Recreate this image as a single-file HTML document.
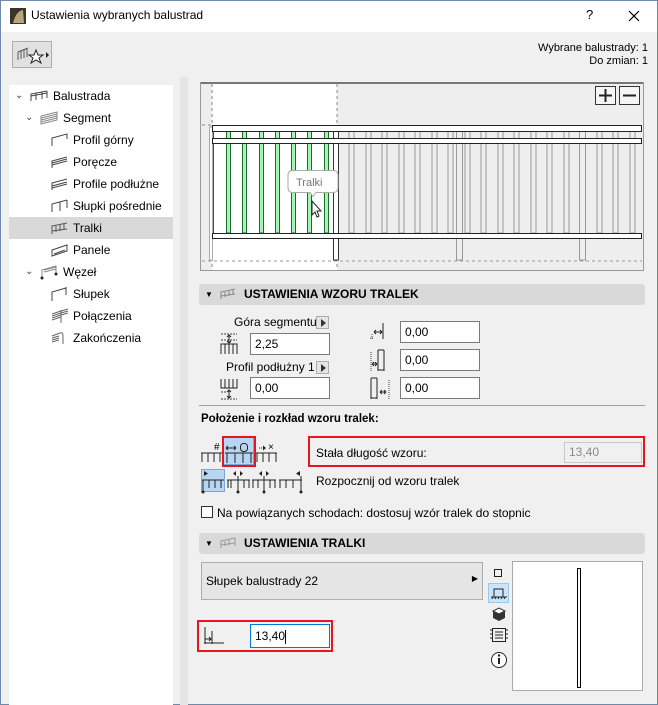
<!DOCTYPE html>
<html><head><meta charset="utf-8"><style>
*{box-sizing:border-box;margin:0;padding:0}
body{width:658px;height:705px;overflow:hidden;background:#f0f0f0;font-family:"Liberation Sans",sans-serif;font-size:12px;color:#000;position:relative}
.a{position:absolute}
.win{position:absolute;left:0;top:0;width:658px;height:705px;border:1px solid #6d8aa8}
.title{left:1px;top:1px;width:656px;height:31px;background:#fff}
.tree{left:9px;top:85px;width:164px;height:620px;background:#fff}
.ti{position:absolute;height:22px;line-height:22px;font-size:12px}
.sel{background:#d9d9d9}
.hdr{background:#d9d9d9;border-radius:3px;height:21px;font-weight:bold;font-size:12px;line-height:21px}
.inp{position:absolute;background:#fff;border:1px solid #7a7a7a;height:22px;line-height:20px;padding-left:4px;font-size:12px}
.red{position:absolute;border:2px solid #e8141e}
.btn{position:absolute;width:13px;height:13px;border:1px solid #adadad;background:#e5e5e5}
.btn:after{content:"";position:absolute;left:4px;top:2px;border-left:5px solid #333;border-top:4px solid transparent;border-bottom:4px solid transparent}
</style></head><body>
<div class="win"></div>
<div class="a title"></div>
<svg class="a" style="left:10px;top:8px" width="16" height="16"><rect width="16" height="16" fill="#3b3428"/><path d="M3 15 Q6 3 13 2 L14 15 Z" fill="#b9a57a"/></svg>
<div class="a" style="left:31px;top:8px;font-size:12px">Ustawienia wybranych balustrad</div>
<div class="a" style="left:586px;top:7px;font-size:13px">?</div>
<svg class="a" style="left:628px;top:10px" width="12" height="12"><path d="M1 1 L11 11 M11 1 L1 11" stroke="#000" stroke-width="1.2"/></svg>

<div class="a" style="left:12px;top:41px;width:40px;height:27px;border:1px solid #adadad;background:#e1e1e1"></div>
<svg class="a" style="left:14px;top:44px" width="36" height="22"><path d="M4 8 L14 4 M4 8 v8 M7 7 v8 M10 6 v8 M13 5 v8" stroke="#555" fill="none"/><path d="M22 6 l2 5 5 0 -4 3 2 5 -5 -3 -5 3 2 -5 -4 -3 5 0z" stroke="#222" fill="#fff"/><path d="M32 8 l3 3 -3 3z" fill="#222"/></svg>
<div class="a" style="right:10px;top:42px;text-align:right;font-size:11px;line-height:13px">Wybrane balustrady: 1<br>Do zmian: 1</div>

<div class="a tree">
<div class="ti" style="left:0;top:0;width:164px"><span style="position:absolute;left:6px;font-size:10px;color:#444">⌄</span><svg style="position:absolute;left:21px;top:5px" width="18" height="12"><path d="M1 11 V4 L17 1 M6 10 V3 M12 9 V2 M17 1 V8 M1 6 L17 3" stroke="#444" fill="none"/></svg><span style="position:absolute;left:44px">Balustrada</span></div>
<div class="ti" style="left:0;top:22px;width:164px"><span style="position:absolute;left:16px;font-size:10px;color:#444">⌄</span><svg style="position:absolute;left:31px;top:4px" width="18" height="14"><path d="M1 13 V5 L17 1 V9 Z M1 7 L17 3 M1 9 L17 5 M1 11 L17 7" stroke="#888" fill="none"/></svg><span style="position:absolute;left:54px">Segment</span></div>
<div class="ti" style="left:0;top:44px;width:164px"><svg style="position:absolute;left:42px;top:4px" width="18" height="14"><path d="M1 13 V5 L16 1 V6" stroke="#444" fill="none"/></svg><span style="position:absolute;left:64px">Profil górny</span></div>
<div class="ti" style="left:0;top:66px;width:164px"><svg style="position:absolute;left:42px;top:4px" width="18" height="14"><path d="M1 13 V6 L16 2 M1 8 L16 4 M1 10 L16 6" stroke="#444" fill="none"/></svg><span style="position:absolute;left:64px">Poręcze</span></div>
<div class="ti" style="left:0;top:88px;width:164px"><svg style="position:absolute;left:42px;top:4px" width="18" height="14"><path d="M1 13 V6 L16 2 M1 9 L16 5 M1 11 L16 7" stroke="#444" fill="none"/></svg><span style="position:absolute;left:64px">Profile podłużne</span></div>
<div class="ti" style="left:0;top:110px;width:164px"><svg style="position:absolute;left:42px;top:4px" width="18" height="14"><path d="M1 13 V5 L16 1 M9 3 V12 M16 1 V9" stroke="#444" fill="none"/></svg><span style="position:absolute;left:64px">Słupki pośrednie</span></div>
<div class="ti sel" style="left:0;top:132px;width:164px"><svg style="position:absolute;left:42px;top:4px" width="18" height="14"><path d="M1 13 V5 L16 2 M1 10 L16 8 M5 5 V11 M9 4 V10 M13 3 V9" stroke="#555" fill="none"/></svg><span style="position:absolute;left:64px">Tralki</span></div>
<div class="ti" style="left:0;top:154px;width:164px"><svg style="position:absolute;left:42px;top:4px" width="18" height="14"><path d="M1 13 V7 L16 2 V8 Z M3 11 L14 7" stroke="#444" fill="none"/></svg><span style="position:absolute;left:64px">Panele</span></div>
<div class="ti" style="left:0;top:176px;width:164px"><span style="position:absolute;left:16px;font-size:10px;color:#444">⌄</span><svg style="position:absolute;left:31px;top:3px" width="18" height="16"><path d="M2 14 V6 L16 2 V10 M4 6 L16 3 M4 8 L16 5" stroke="#888" fill="none"/><circle cx="2" cy="14" r="1.5" fill="#222"/><circle cx="16" cy="10" r="1.5" fill="#222"/></svg><span style="position:absolute;left:54px">Węzeł</span></div>
<div class="ti" style="left:0;top:198px;width:164px"><svg style="position:absolute;left:42px;top:3px" width="18" height="16"><path d="M1 15 V6 L15 2 M15 1 V9" stroke="#444" fill="none"/></svg><span style="position:absolute;left:64px">Słupek</span></div>
<div class="ti" style="left:0;top:220px;width:164px"><svg style="position:absolute;left:42px;top:3px" width="18" height="16"><path d="M1 6 L10 3 M1 8 L10 5 M1 10 L10 7 M1 12 L10 9 M10 2 V15 M10 3 L17 1 M10 5 L17 3 M10 7 L17 5" stroke="#666" fill="none"/></svg><span style="position:absolute;left:64px">Połączenia</span></div>
<div class="ti" style="left:0;top:242px;width:164px"><svg style="position:absolute;left:42px;top:3px" width="18" height="16"><path d="M1 6 L9 3 Q12 2 12 6 V14 M1 8 L8 6 M1 10 L8 8 M1 12 L8 10" stroke="#666" fill="none"/></svg><span style="position:absolute;left:64px">Zakończenia</span></div>
</div>

<div class="a" style="left:180px;top:77px;width:8px;height:628px;background:#e6e6e6"></div>

<!-- preview -->
<svg class="a" style="left:200px;top:82px" width="445" height="190" viewBox="200 82 445 190">
<rect x="200.5" y="82.5" width="443" height="188" fill="#eeeeee" stroke="#999"/>
<line x1="201" y1="83" x2="643" y2="83" stroke="#777" stroke-width="2"/>
<rect x="212" y="84" width="125" height="186" fill="#fff"/>
<line x1="337" y1="84" x2="337" y2="270" stroke="#888" stroke-dasharray="3,3"/>
<line x1="212" y1="84" x2="212" y2="270" stroke="#888" stroke-dasharray="3,3"/>
<line x1="202" y1="261" x2="642" y2="261" stroke="#999" stroke-dasharray="3,3"/>
<line x1="202" y1="125" x2="212" y2="125" stroke="#888" stroke-dasharray="3,3"/>
<g fill="none" stroke="#999">
<rect x="349" y="131" width="5" height="102"/><rect x="366" y="131" width="5" height="102"/><rect x="382" y="131" width="5" height="102"/><rect x="399" y="131" width="5" height="102"/><rect x="415" y="131" width="5" height="102"/><rect x="432" y="131" width="5" height="102"/><rect x="448" y="131" width="5" height="102"/><rect x="465" y="131" width="5" height="102"/><rect x="481" y="131" width="5" height="102"/><rect x="498" y="131" width="5" height="102"/><rect x="514" y="131" width="5" height="102"/><rect x="531" y="131" width="5" height="102"/><rect x="547" y="131" width="5" height="102"/><rect x="564" y="131" width="5" height="102"/><rect x="580" y="131" width="5" height="102"/><rect x="597" y="131" width="5" height="102"/><rect x="613" y="131" width="5" height="102"/><rect x="630" y="131" width="5" height="102"/>
<rect x="456.5" y="131" width="6" height="129" fill="#eee"/><rect x="579.5" y="131" width="6" height="129" fill="#eee"/>
</g>
<g fill="#a6f5b8" stroke="#1f6b2c">
<rect x="226.5" y="131" width="4" height="102"/><rect x="242.5" y="131" width="4" height="102"/><rect x="259.5" y="131" width="4" height="102"/><rect x="275.5" y="131" width="4" height="102"/><rect x="291.5" y="131" width="4" height="102"/><rect x="307.5" y="131" width="4" height="102"/><rect x="324.5" y="131" width="4" height="102"/>
</g>
<line x1="213" y1="131" x2="213" y2="233" stroke="#1f6b2c" stroke-width="2"/>
<rect x="209.5" y="127" width="3" height="133" fill="#fff" stroke="#aaa"/>
<rect x="333.5" y="128" width="5" height="132" fill="#fff" stroke="#333"/>
<g fill="#fff" stroke="#222">
<rect x="212.5" y="125.5" width="429" height="6"/><rect x="212.5" y="138.5" width="429" height="5"/><rect x="212.5" y="233.5" width="429" height="5"/>
</g>
<rect x="595.5" y="86.5" width="20" height="18" fill="#f5f5f5" stroke="#333"/><path d="M599 95.5 h13 M605.5 89 v13" stroke="#222" stroke-width="2"/>
<rect x="619.5" y="86.5" width="20" height="18" fill="#f5f5f5" stroke="#333"/><path d="M623 95.5 h13" stroke="#222" stroke-width="2"/>
<path d="M293 170.5 h40 q5 0 5 5 v12 q0 5 -5 5 h-17 l-3 4 -3 -4 h-17 q-5 0 -5 -5 v-12 q0 -5 5 -5z" fill="#fff" stroke="#aaa"/>
<text x="296" y="186" font-family="Liberation Sans" font-size="11" fill="#777">Tralki</text>
<path d="M312 201 v14 l3 -3 2 5 2 -1 -2 -5 4 0 z" fill="#fff" stroke="#222"/>
</svg>

<!-- section 1 -->
<div class="a hdr" style="left:199px;top:284px;width:446px"><span style="position:absolute;left:6px;top:0;font-size:8px">▼</span><svg style="position:absolute;left:21px;top:4px" width="16" height="12"><path d="M1 11 V4 L15 1 M1 8 L15 6 M5 4 V9 M9 3 V8 M13 2 V7" stroke="#888" fill="none"/></svg><span style="position:absolute;left:45px">USTAWIENIA WZORU TRALEK</span></div>
<div class="a" style="left:234px;top:315px">Góra segmentu</div><div class="btn" style="left:316px;top:316px"></div>
<svg class="a" style="left:220px;top:333px" width="24" height="22"><path d="M1 1 h16 M1 7 h16" stroke="#444" stroke-dasharray="2,1" fill="none"/><path d="M9 2 v8 M7 4 l2 -2 2 2 M7 8 l2 2 2 -2 M1 21 v-10 h16 v10 M5 11 v10 M9 11 v10 M13 11 v10" stroke="#222" fill="none"/></svg>
<div class="inp" style="left:250px;top:333px;width:80px">2,25</div>
<div class="a" style="left:226px;top:360px">Profil podłużny 1</div><div class="btn" style="left:316px;top:361px"></div>
<svg class="a" style="left:220px;top:378px" width="24" height="22"><path d="M1 1 v9 h16 v-9 M5 1 v9 M9 1 v9 M13 1 v9 M9 12 v8 M7 14 l2 -2 2 2 M7 18 l2 2 2 -2" stroke="#222" fill="none"/><path d="M1 21 h16 M1 14 h6" stroke="#444" stroke-dasharray="2,1"/></svg>
<div class="inp" style="left:250px;top:377px;width:80px">0,00</div>

<svg class="a" style="left:369px;top:322px" width="22" height="22"><path d="M14 1 v16 M5 10 h8 M5 10 l2 -2 M5 10 l2 2 M13 10 l-2 -2 M13 10 l-2 2" stroke="#222" fill="none"/><path d="M3 12 v6 M1 16 h4" stroke="#444" stroke-dasharray="1,1"/></svg>
<div class="inp" style="left:400px;top:321px;width:80px">0,00</div>
<svg class="a" style="left:369px;top:349px" width="22" height="22"><path d="M9 1 v21 M15 1 v21 M9 1 h6 M9 21 h6 M3 15 h5 M3 15 l2 -2 M3 15 l2 2 M8 15 l-2 -2 M8 15 l-2 2" stroke="#222" fill="none"/><path d="M2 3 v19" stroke="#444" stroke-dasharray="1,1"/></svg>
<div class="inp" style="left:400px;top:349px;width:80px">0,00</div>
<svg class="a" style="left:369px;top:377px" width="22" height="22"><path d="M2 1 v21 M8 1 v21 M2 1 h6 M2 21 h6 M11 15 h6 M11 15 l2 -2 M11 15 l2 2 M17 15 l-2 -2 M17 15 l-2 2" stroke="#222" fill="none"/><path d="M20 3 v19" stroke="#444" stroke-dasharray="1,1"/></svg>
<div class="inp" style="left:400px;top:377px;width:80px">0,00</div>

<div class="a" style="left:199px;top:405px;width:446px;height:1px;background:#a0a0a0"></div>
<div class="a" style="left:201px;top:413px;font-weight:bold;font-size:11.5px">Położenie i rozkład wzoru tralek:</div>

<svg class="a" style="left:200px;top:436px" width="110" height="60">
<g stroke="#222" fill="none">
<path d="M1 17 h21 M2 17 v9 M8 17 v9 M14 17 v9 M20 17 v9"/>
</g>
<text x="14" y="14" font-size="10" font-family="Liberation Sans">#</text>
<rect x="23.5" y="1.5" width="30" height="27" fill="#b7d6f3" stroke="#7aa7d6"/>
<g stroke="#222" fill="none">
<path d="M25 17 h28 M27 17 v10 M35 17 v10 M43 17 v10 M51 17 v10 M26 12 h10 M26 12 l2 -2 M26 12 l2 2 M36 12 l-2 -2 M36 12 l-2 2"/>
<rect x="40.5" y="7.5" width="7" height="8" rx="3"/>
<path d="M55 17 h22 M57 17 v9 M63 17 v9 M69 17 v9 M76 17 v9"/>
<path d="M55 12 h2 M59 12 h6" stroke-dasharray="1,1"/>
</g>
<path d="M63 9.5 l3 2.5 -3 2.5z" fill="#222"/>
<text x="68" y="14" font-size="10" font-family="Liberation Sans">×</text>
<rect x="1.5" y="33.5" width="23" height="22" fill="#b7d6f3" stroke="#7aa7d6"/>
<g stroke="#222" fill="none">
<path d="M2 44 h22 M3 44 v12 M9 44 v8 M15 44 v8 M21 44 v8"/>
<path d="M27 44 h23 M28 44 v8 M31 44 v8 M38 40 v16 M44 44 v8 M49 44 v8"/>
<path d="M52 44 h24 M53 44 v8 M58 44 v8 M64 40 v16 M70 44 v8 M75 44 v8"/>
<path d="M79 44 h23 M80 44 v8 M86 44 v8 M93 44 v8 M101 40 v16"/>
</g>
<g fill="#222">
<path d="M4 35 v5 l4 -2.5z"/><path d="M36 35 v5 l-3 -2.5z M40 35 v5 l3 -2.5z"/><path d="M62 35 v5 l-3 -2.5z M66 35 v5 l3 -2.5z"/><path d="M100 35 v5 l-4 -2.5z"/>
<circle cx="3" cy="56" r="1.5"/><circle cx="38" cy="56" r="1.5"/><circle cx="64" cy="56" r="1.5"/><circle cx="101" cy="56" r="1.5"/>
</g>
</svg>
<div class="red" style="left:222px;top:436px;width:34px;height:31px"></div>
<div class="red" style="left:308px;top:436px;width:337px;height:31px"></div>
<div class="a" style="left:316px;top:446px">Stała długość wzoru:</div>
<div class="a" style="left:564px;top:442px;width:78px;height:21px;border:1px solid #c8c8c8;background:#f0f0f0;color:#888;line-height:19px;padding-left:4px">13,40</div>
<div class="a" style="left:316px;top:474px">Rozpocznij od wzoru tralek</div>

<div class="a" style="left:201px;top:506px;width:12px;height:12px;border:1px solid #333;background:#fff"></div>
<div class="a" style="left:217px;top:506px">Na powiązanych schodach: dostosuj wzór tralek do stopnic</div>

<div class="a hdr" style="left:199px;top:533px;width:446px"><span style="position:absolute;left:6px;top:0;font-size:8px">▼</span><svg style="position:absolute;left:21px;top:4px" width="16" height="12"><path d="M1 11 V4 L15 1 V9 M1 8 L15 6 M5 4 V9 M9 3 V8" stroke="#999" fill="none"/></svg><span style="position:absolute;left:45px">USTAWIENIA TRALKI</span></div>
<div class="a" style="left:201px;top:562px;width:282px;height:38px;border:1px solid #adadad;background:#e5e5e5"><span style="position:absolute;left:4px;top:11px">Słupek balustrady 22</span><span style="position:absolute;right:4px;top:11px;font-size:8px">▶</span></div>
<div class="a" style="left:494px;top:569px;width:8px;height:8px;border:1px solid #222"></div>
<div class="a" style="left:488px;top:583px;width:21px;height:20px;background:#cce4f7;border:1px solid #99c9ef"></div>
<svg class="a" style="left:490px;top:585px" width="18" height="16"><path d="M4 12 V4 h9 v8 M1 12 h16" stroke="#222" fill="none"/><path d="M2 14 l1 -2 M5 14 l1 -2 M8 14 l1 -2 M11 14 l1 -2 M14 14 l1 -2" stroke="#222"/></svg>
<svg class="a" style="left:491px;top:607px" width="16" height="16"><path d="M8 1 L14 4 V11 L8 14 L2 11 V4z" fill="#333"/><path d="M2 4 L8 7 L14 4 L8 1z" fill="#fff" stroke="#333"/></svg>
<svg class="a" style="left:490px;top:627px" width="18" height="16"><rect x="2.5" y="1.5" width="13" height="13" fill="none" stroke="#222"/><path d="M5 5 h8 M5 8 h8 M5 11 h8 M0 3 h2 M0 7 h2 M0 11 h2 M16 3 h2 M16 7 h2 M16 11 h2" stroke="#222"/></svg>
<svg class="a" style="left:490px;top:651px" width="18" height="18"><circle cx="9" cy="9" r="7.5" fill="#fff" stroke="#222"/><path d="M9 7 v6" stroke="#222" stroke-width="2"/><circle cx="9" cy="4.5" r="1.2" fill="#222"/></svg>
<div class="a" style="left:512px;top:561px;width:131px;height:130px;background:#fff;border:1px solid #aaa"><div style="position:absolute;left:64px;top:6px;width:4px;height:120px;border:1px solid #000"></div></div>

<div class="red" style="left:197px;top:620px;width:136px;height:32px"></div>
<svg class="a" style="left:203px;top:626px" width="24" height="20"><path d="M2 1 v17 M1 17 h20 M2 13 h6 M6 11 l2 2 -2 2 M9 5 v13" stroke="#222" fill="none"/></svg>
<div class="a" style="left:250px;top:624px;width:80px;height:24px;border:1px solid #0078d7;background:#fff;padding-left:4px;line-height:22px">13,40<span style="display:inline-block;width:1px;height:14px;background:#000;vertical-align:middle"></span></div>
</body></html>
